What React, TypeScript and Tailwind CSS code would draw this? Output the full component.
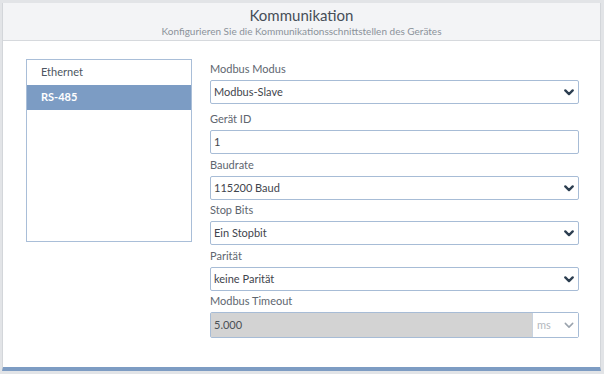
const font = { fontFamily: "Lato, 'Noto Sans', sans-serif" };

function Chevron({ muted = false }: { muted?: boolean }) {
  return (
    <svg width="10" height="7" viewBox="0 0 10 7" className="shrink-0">
      <path
        d="M1.3 1.4 L5 5.1 L8.7 1.4"
        fill="none"
        stroke={muted ? "#9aa3ad" : "#2c3e50"}
        strokeWidth={muted ? 1.5 : 2.3}
        strokeLinecap="round"
        strokeLinejoin="round"
      />
    </svg>
  );
}

function SelectField({ label, value, className = "" }: { label: string; value: string; className?: string }) {
  return (
    <div className={className}>
      <div className="h-[17px] text-[11px] leading-[17px] text-[#5e666f]">{label}</div>
      <div className="mt-[3px] flex h-[24px] items-center justify-between rounded-[2px] border border-[#a7bcd6] bg-white pl-[3px] pr-[4px] text-[11px] text-[#3f454d]">
        <span>{value}</span>
        <Chevron />
      </div>
    </div>
  );
}

export default function App() {
  const tabs = ["Ethernet", "RS-485"];
  const active = "RS-485";

  return (
    <div className="h-[374px] w-[604px] overflow-hidden bg-[#e2e4e7] pl-[2px] pr-[3px] pt-[3px]" style={font}>
      <div className="flex h-[368px] flex-col border-x border-[#d3d6da] border-b-4 border-b-[#7d9cc3] bg-white">
        <div className="flex h-[38px] flex-col items-center border-b border-[#d6d9dd] bg-[#f3f4f6] pt-[3px]">
          <div className="text-[15px] leading-[19px] text-[#464e58]">Kommunikation</div>
          <div className="text-[10px] leading-[13px] text-[#8b929a]">
            Konfigurieren Sie die Kommunikationsschnittstellen des Gerätes
          </div>
        </div>

        <div className="flex gap-[18px] pl-[23px] pt-[18px]">
          <div className="h-[183px] w-[166px] border border-[#a9bed8]">
            {tabs.map((t) => (
              <div
                key={t}
                className={
                  t === active
                    ? "flex h-[25px] items-center bg-[#7c9cc4] pl-[14px] text-[11px] font-bold text-white"
                    : "flex h-[25px] items-center pl-[14px] text-[11px] text-[#4d5662]"
                }
              >
                {t}
              </div>
            ))}
          </div>

          <div className="w-[369px] pt-[1px]">
            <SelectField label="Modbus Modus" value="Modbus-Slave" />

            <div className="mt-[6px]">
              <div className="h-[17px] text-[11px] leading-[17px] text-[#5e666f]">Gerät ID</div>
              <div className="mt-[3px] flex h-[24px] items-center rounded-[2px] border border-[#a7bcd6] bg-white pl-[3px] text-[11px] text-[#3f454d]">
                1
              </div>
            </div>

            <SelectField className="mt-[2px]" label="Baudrate" value="115200 Baud" />
            <SelectField className="mt-[1px]" label="Stop Bits" value="Ein Stopbit" />
            <SelectField className="mt-[2px]" label="Parität" value="keine Parität" />

            <div className="mt-[1px]">
              <div className="h-[17px] text-[11px] leading-[17px] text-[#5e666f]">Modbus Timeout</div>
              <div className="mt-[3px] flex h-[26px] rounded-[2px] border border-[#a7bcd6]">
                <div className="flex flex-1 items-center bg-[#d3d3d3] pl-[3px] text-[11px] text-[#4a4f55]">5.000</div>
                <div className="flex w-[46px] items-center justify-between border-l border-[#c9d3df] bg-white pl-[4px] pr-[4px] text-[11px] text-[#b3b8bd]">
                  <span>ms</span>
                  <Chevron muted />
                </div>
              </div>
            </div>
          </div>
        </div>
      </div>
    </div>
  );
}
